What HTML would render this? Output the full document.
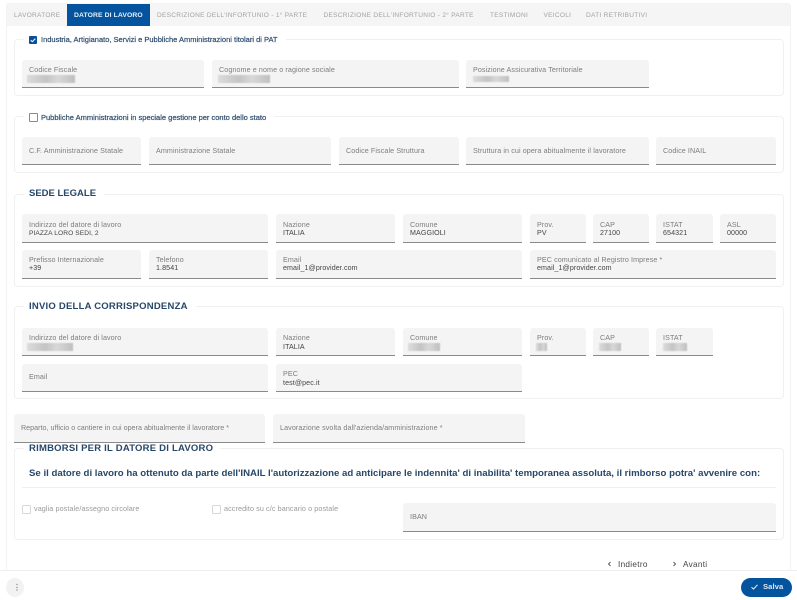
<!DOCTYPE html>
<html lang="it"><head><meta charset="utf-8"><title>Datore di lavoro</title>
<style>
html,body{margin:0;padding:0;width:797px;height:600px;overflow:hidden;background:#fff}
body{font-family:"Liberation Sans",sans-serif;position:relative}
#w{position:absolute;left:0;top:0;width:797px;height:600px;filter:blur(.3px)}
#w div,#w span{position:absolute;white-space:nowrap}
.card{left:6px;top:3px;width:785px;height:590px;border:1px solid #f2f2f2;border-radius:3px;box-sizing:border-box}
.tabs{left:7px;top:4px;width:783px;height:22px;background:#f5f5f5}
.tab{top:11px;font-size:6.5px;letter-spacing:.3px;color:#a2a2a2;line-height:10px}
.act{left:67px;top:4px;width:83px;height:22px;background:#04539f}
.fs{border:1px solid #f0f0f0;border-radius:4px;box-sizing:border-box;left:14px;width:770px}
.leg{background:#fff;height:12px}
.h{font-size:9.5px;font-weight:bold;color:#27476a;line-height:12px}
.f{background:#f4f4f4;border-radius:3px 3px 0 0;border-bottom:1px solid #8a8a8a;box-sizing:border-box}
.l{left:7px;font-size:7.15px;color:#7d7d7d;line-height:9px;letter-spacing:.1px}
.v{left:7px;font-size:7.1px;color:#444;line-height:9px;letter-spacing:.1px}
.b{height:8px;background:linear-gradient(90deg,#dcdcdc,#c4c4c4 40%,#d8d8d8 65%,#bfbfbf);filter:blur(.6px)}
.chk{width:6.5px;height:6.5px;border:1px solid #8a8a8a;border-radius:1px;background:#fff}
.chk2{width:7px;height:7px;border:1px solid #d8d8d8;border-radius:1px;background:#fff}
.ct{font-size:7.5px;font-weight:bold;color:#2f4d6e;line-height:10px}
.g{font-size:7.2px;color:#9a9a9a;line-height:10px;letter-spacing:.1px}
</style></head><body><div id="w">
<div class="card"></div>
<div class="tabs"></div>
<div class="act"></div>
<span class="tab" style="left:14px">LAVORATORE</span>
<span class="tab" style="left:74px;color:#e8f0f8;font-weight:bold;font-size:6.8px;letter-spacing:.1px">DATORE DI LAVORO</span>
<span class="tab" style="left:157px">DESCRIZIONE DELL'INFORTUNIO - 1° PARTE</span>
<span class="tab" style="left:323.5px">DESCRIZIONE DELL'INFORTUNIO - 2° PARTE</span>
<span class="tab" style="left:490px">TESTIMONI</span>
<span class="tab" style="left:543.5px">VEICOLI</span>
<span class="tab" style="left:586px">DATI RETRIBUTIVI</span>

<!-- FS1 -->
<div class="fs" style="top:39px;height:57px"></div>
<div class="leg" style="left:24px;top:33px;width:262px"></div>
<div style="left:29px;top:36px;width:8px;height:8px;background:#0a4f98;border-radius:1px"></div>
<svg style="position:absolute;left:29px;top:36px" width="8" height="8" viewBox="0 0 8 8"><path d="M1.7 4.2 3.3 5.7 6.3 2.6" fill="none" stroke="#fff" stroke-width="1"/></svg>
<span class="ct" style="left:41px;top:35px;font-weight:normal;-webkit-text-stroke:.2px #2f4d6e">Industria, Artigianato, Servizi e Pubbliche Amministrazioni titolari di PAT</span>
<div class="f" style="left:22px;top:60px;width:182px;height:28px"><span class="l" style="top:6px">Codice Fiscale</span><div class="b" style="left:5px;top:15px;width:48px"></div></div>
<div class="f" style="left:212px;top:60px;width:247px;height:28px"><span class="l" style="top:6px">Cognome e nome o ragione sociale</span><div class="b" style="left:6px;top:15px;width:52px"></div></div>
<div class="f" style="left:466px;top:60px;width:183px;height:28px"><span class="l" style="top:6px">Posizione Assicurativa Territoriale</span><div class="b" style="left:7px;top:16px;width:36px;height:6px"></div></div>

<!-- FS2 -->
<div class="fs" style="top:116px;height:57px"></div>
<div class="leg" style="left:24px;top:111px;width:250px"></div>
<div class="chk" style="left:29px;top:113px"></div>
<span class="ct" style="left:41px;top:112.5px;font-weight:normal;-webkit-text-stroke:.2px #2f4d6e">Pubbliche Amministrazioni in speciale gestione per conto dello stato</span>
<div class="f" style="left:22px;top:137px;width:119px;height:28px"><span class="l" style="top:10px">C.F. Amministrazione Statale</span></div>
<div class="f" style="left:149px;top:137px;width:182px;height:28px"><span class="l" style="top:10px">Amministrazione Statale</span></div>
<div class="f" style="left:339px;top:137px;width:120px;height:28px"><span class="l" style="top:10px">Codice Fiscale Struttura</span></div>
<div class="f" style="left:466px;top:137px;width:183px;height:28px"><span class="l" style="top:10px">Struttura in cui opera abitualmente il lavoratore</span></div>
<div class="f" style="left:656px;top:137px;width:120px;height:28px"><span class="l" style="top:10px">Codice INAIL</span></div>

<!-- FS3 -->
<div class="fs" style="top:194px;height:93px"></div>
<div class="leg" style="left:24px;top:187px;width:80px"></div>
<span class="h" style="left:29px;top:187.5px">SEDE LEGALE</span>
<div class="f" style="left:22px;top:214px;width:246px;height:29px"><span class="l" style="top:6.5px">Indirizzo del datore di lavoro</span><span class="v" style="top:14.5px;font-size:6.6px">PIAZZA LORO SEDI, 2</span></div>
<div class="f" style="left:276px;top:214px;width:119px;height:29px"><span class="l" style="top:6.5px">Nazione</span><span class="v" style="top:14.5px">ITALIA</span></div>
<div class="f" style="left:403px;top:214px;width:119px;height:29px"><span class="l" style="top:6.5px">Comune</span><span class="v" style="top:14.5px">MAGGIOLI</span></div>
<div class="f" style="left:530px;top:214px;width:56px;height:29px"><span class="l" style="top:6.5px">Prov.</span><span class="v" style="top:14.5px">PV</span></div>
<div class="f" style="left:593px;top:214px;width:56px;height:29px"><span class="l" style="top:6.5px">CAP</span><span class="v" style="top:14.5px">27100</span></div>
<div class="f" style="left:656px;top:214px;width:57px;height:29px"><span class="l" style="top:6.5px">ISTAT</span><span class="v" style="top:14.5px">654321</span></div>
<div class="f" style="left:720px;top:214px;width:56px;height:29px"><span class="l" style="top:6.5px">ASL</span><span class="v" style="top:14.5px">00000</span></div>
<div class="f" style="left:22px;top:250px;width:119px;height:29px"><span class="l" style="top:6px">Prefisso Internazionale</span><span class="v" style="top:14px">+39</span></div>
<div class="f" style="left:149px;top:250px;width:119px;height:29px"><span class="l" style="top:6px">Telefono</span><span class="v" style="top:14px">1.8541</span></div>
<div class="f" style="left:276px;top:250px;width:246px;height:29px"><span class="l" style="top:6px">Email</span><span class="v" style="top:14px">email_1@provider.com</span></div>
<div class="f" style="left:530px;top:250px;width:246px;height:29px"><span class="l" style="top:6px">PEC comunicato al Registro Imprese *</span><span class="v" style="top:14px">email_1@provider.com</span></div>

<!-- FS4 -->
<div class="fs" style="top:306px;height:93px"></div>
<div class="leg" style="left:24px;top:300px;width:172px"></div>
<span class="h" style="left:29px;top:301px;letter-spacing:.23px">INVIO DELLA CORRISPONDENZA</span>
<div class="f" style="left:22px;top:328px;width:246px;height:28px"><span class="l" style="top:6px">Indirizzo del datore di lavoro</span><div class="b" style="left:5px;top:15px;width:46px"></div></div>
<div class="f" style="left:276px;top:328px;width:119px;height:28px"><span class="l" style="top:6px">Nazione</span><span class="v" style="top:14.5px">ITALIA</span></div>
<div class="f" style="left:403px;top:328px;width:119px;height:28px"><span class="l" style="top:6px">Comune</span><div class="b" style="left:5px;top:15px;width:32px"></div></div>
<div class="f" style="left:530px;top:328px;width:56px;height:28px"><span class="l" style="top:6px">Prov.</span><div class="b" style="left:6px;top:15px;width:11px"></div></div>
<div class="f" style="left:593px;top:328px;width:56px;height:28px"><span class="l" style="top:6px">CAP</span><div class="b" style="left:6px;top:15px;width:22px"></div></div>
<div class="f" style="left:656px;top:328px;width:57px;height:28px"><span class="l" style="top:6px">ISTAT</span><div class="b" style="left:7px;top:15px;width:24px"></div></div>
<div class="f" style="left:22px;top:364px;width:246px;height:28px"><span class="l" style="top:9px">Email</span></div>
<div class="f" style="left:276px;top:364px;width:246px;height:28px"><span class="l" style="top:6px">PEC</span><span class="v" style="top:14.5px">test@pec.it</span></div>

<!-- standalone -->
<div class="f" style="left:14px;top:414px;width:251px;height:29px"><span class="l" style="top:10px;letter-spacing:.02px">Reparto, ufficio o cantiere in cui opera abitualmente il lavoratore *</span></div>
<div class="f" style="left:273px;top:414px;width:252px;height:29px"><span class="l" style="top:10px">Lavorazione svolta dall'azienda/amministrazione *</span></div>

<!-- FS5 -->
<div class="fs" style="top:448px;height:92px"></div>
<div class="leg" style="left:24px;top:443px;width:196px"></div>
<span class="h" style="left:29px;top:442.5px;letter-spacing:.22px">RIMBORSI PER IL DATORE DI LAVORO</span>
<span style="left:29px;top:468px;font-size:9.63px;font-weight:bold;color:#27476a;line-height:12px">Se il datore di lavoro ha ottenuto da parte dell'INAIL l'autorizzazione ad anticipare le indennita' di inabilita' temporanea assoluta, il rimborso potra' avvenire con:</span>
<div style="left:22px;top:487px;width:754px;height:1px;background:#eee"></div>
<div class="chk2" style="left:22px;top:505px"></div>
<span class="g" style="left:34px;top:504px">vaglia postale/assegno circolare</span>
<div class="chk2" style="left:212px;top:505px"></div>
<span class="g" style="left:224px;top:504px">accredito su c/c bancario o postale</span>
<div class="f" style="left:403px;top:503px;width:373px;height:29px"><span class="l" style="top:10px">IBAN</span></div>

<!-- nav -->
<svg style="position:absolute;left:607px;top:561px" width="5" height="6" viewBox="0 0 5 6"><path d="M3.5 1 1.5 3 3.5 5" fill="none" stroke="#555" stroke-width=".9"/></svg>
<span style="left:618px;top:560px;font-size:8.2px;color:#444;line-height:10px;letter-spacing:.3px">Indietro</span>
<svg style="position:absolute;left:672px;top:561px" width="5" height="6" viewBox="0 0 5 6"><path d="M1.5 1 3.5 3 1.5 5" fill="none" stroke="#555" stroke-width=".9"/></svg>
<span style="left:683px;top:560px;font-size:8.2px;color:#444;line-height:10px;letter-spacing:.3px">Avanti</span>

<!-- footer -->
<div style="left:0;top:570px;width:797px;height:30px;background:#fff;border-top:1px solid #eee;box-sizing:border-box"></div>
<div style="left:6px;top:578px;width:18px;height:19px;border-radius:50%;background:#f2f2f2"></div>
<span style="left:13px;top:583px;width:4px;text-align:center;font-size:8px;line-height:9px;color:#888;font-weight:bold">⋮</span>
<div style="left:741px;top:578px;width:51px;height:19px;border-radius:10px;background:#04539f"></div>
<svg style="position:absolute;left:750px;top:583px" width="9" height="8" viewBox="0 0 9 8"><path d="M1.5 4.2 3.5 6 7.5 1.8" fill="none" stroke="#e8f0f8" stroke-width="1"/></svg>
<span style="left:763px;top:582px;font-size:7.6px;font-weight:bold;color:#dfe9f4;line-height:10px;letter-spacing:.1px">Salva</span>
</div></body></html>
